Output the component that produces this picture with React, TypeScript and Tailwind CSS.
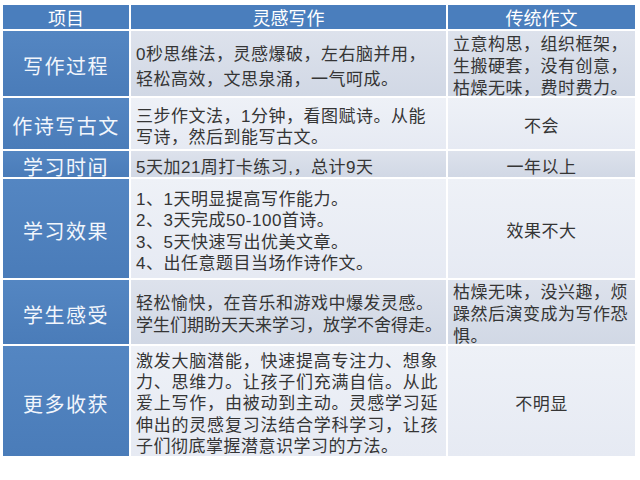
import React from 'react';

const font = { fontFamily: '"Liberation Sans", "Noto Sans CJK SC", sans-serif' };

const HeadCell: React.FC<{ children: React.ReactNode }> = ({ children }) => (
  <div className="flex items-center justify-center bg-[#4a7ebd] pt-[3px] text-[18px] leading-none text-white">
    {children}
  </div>
);

const SideCell: React.FC<{ children: React.ReactNode }> = ({ children }) => (
  <div className="flex items-center justify-center bg-gradient-to-b from-[#5486c2] to-[#4a7cb9] pt-[7px] text-[20px] leading-none tracking-[1.5px] text-[#f2f6fc]">
    {children}
  </div>
);

const BodyCell: React.FC<{
  lines: string[];
  leading: string;
  odd: boolean;
  center?: boolean;
  justify?: boolean;
}> = ({ lines, leading, odd, center, justify }) => (
  <div
    className={`flex flex-col justify-center pt-[6px] text-[17px] tracking-[0.5px] text-[#353535] ${leading} ${
      odd ? 'bg-gradient-to-b from-[#dde2ec] to-[#d1d8e5]' : 'bg-gradient-to-b from-[#eef1f7] to-[#e6eaf3]'
    } ${center ? 'items-center' : 'pl-[5px] pr-[8px]'}`}
  >
    {lines.map((line, i) => (
      <div
        key={i}
        className={`whitespace-nowrap ${justify && i < lines.length - 1 ? '[text-align-last:justify]' : ''} ${
          line.length > 17 ? 'tracking-normal' : ''
        }`}
      >
        {line}
      </div>
    ))}
  </div>
);

export default function App() {
  return (
    <div className="min-h-screen w-[640px] bg-white" style={font}>
      <div className="ml-[3px] grid grid-cols-[126px_315px_187px] grid-rows-[24px_65px_51px_26px_99px_64px_110px] gap-[2px] pt-[5px]">
        <HeadCell>项目</HeadCell>
        <HeadCell>灵感写作</HeadCell>
        <HeadCell>传统作文</HeadCell>

        <SideCell>写作过程</SideCell>
        <BodyCell odd leading="leading-[25px]" lines={['0秒思维法，灵感爆破，左右脑并用，', '轻松高效，文思泉涌，一气呵成。']} />
        <BodyCell odd leading="leading-[22px]" lines={['立意构思，组织框架，', '生搬硬套，没有创意，', '枯燥无味，费时费力。']} />

        <SideCell>作诗写古文</SideCell>
        <BodyCell odd={false} leading="leading-[21px]" lines={['三步作文法，1分钟，看图赋诗。从能', '写诗，然后到能写古文。']} />
        <BodyCell odd={false} center leading="leading-[21px]" lines={['不会']} />

        <SideCell>学习时间</SideCell>
        <BodyCell odd leading="leading-[21px]" lines={['5天加21周打卡练习,，总计9天']} />
        <BodyCell odd center leading="leading-[21px]" lines={['一年以上']} />

        <SideCell>学习效果</SideCell>
        <BodyCell
          odd={false}
          leading="leading-[21.3px]"
          lines={['1、1天明显提高写作能力。', '2、3天完成50-100首诗。', '3、5天快速写出优美文章。', '4、出任意题目当场作诗作文。']}
        />
        <BodyCell odd={false} center leading="leading-[21px]" lines={['效果不大']} />

        <SideCell>学生感受</SideCell>
        <BodyCell
          odd
          leading="leading-[22px]"
          lines={['轻松愉快，在音乐和游戏中爆发灵感。', '学生们期盼天天来学习，放学不舍得走。']}
        />
        <BodyCell odd leading="leading-[22px]" lines={['枯燥无味，没兴趣，烦', '躁然后演变成为写作恐', '惧。']} />

        <SideCell>更多收获</SideCell>
        <BodyCell
          odd={false}
          justify
          leading="leading-[21.3px]"
          lines={[
            '激发大脑潜能，快速提高专注力、想象',
            '力、思维力。让孩子们充满自信。从此',
            '爱上写作，由被动到主动。灵感学习延',
            '伸出的灵感复习法结合学科学习，让孩',
            '子们彻底掌握潜意识学习的方法。',
          ]}
        />
        <BodyCell odd={false} center leading="leading-[21px]" lines={['不明显']} />
      </div>
    </div>
  );
}
